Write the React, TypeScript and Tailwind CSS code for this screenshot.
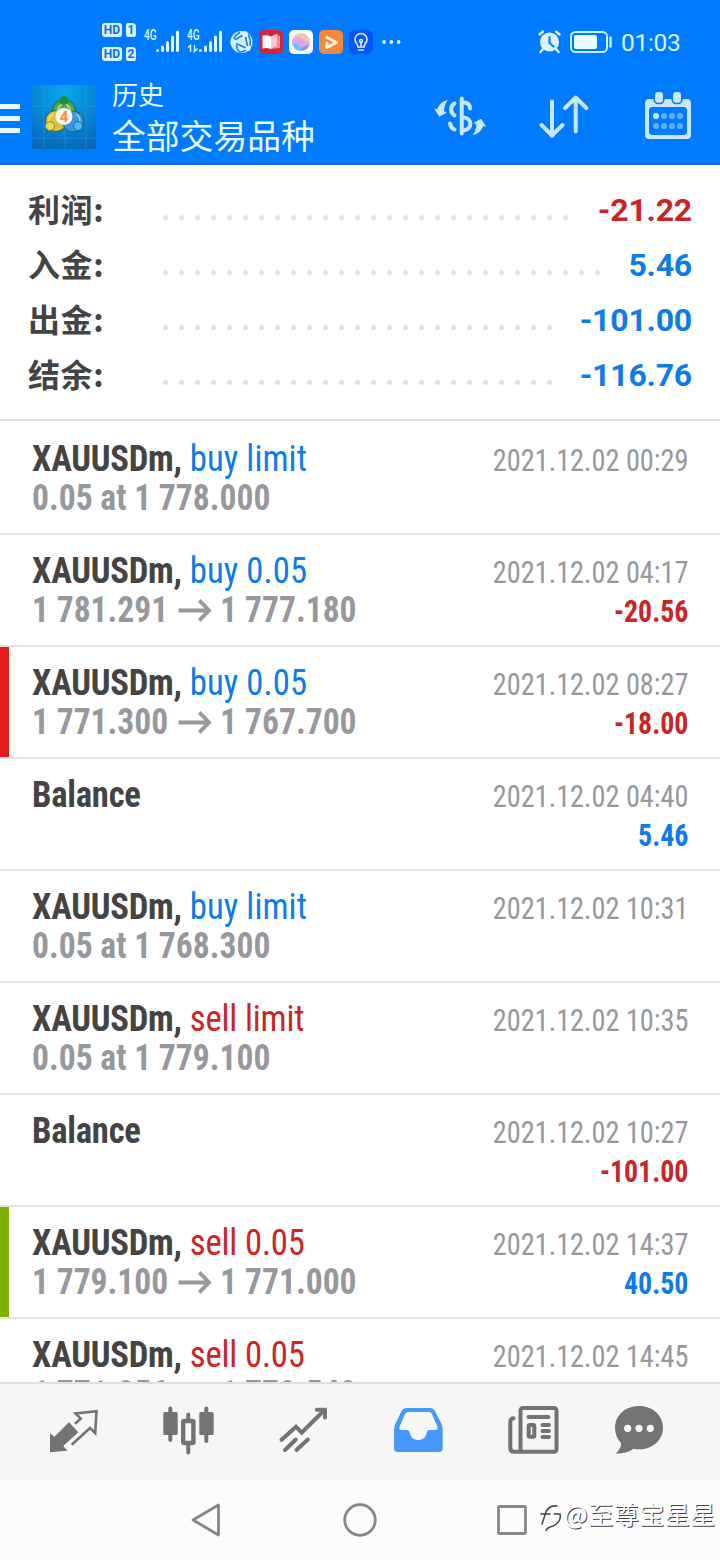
type Tone = "blue" | "red";

interface Deal {
  symbol: string;
  action?: string;
  tone?: Tone;
  detail?: string;
  target?: string;
  date: string;
  profit?: string;
  profitTone?: Tone;
  bar?: string;
}

const toneClass: Record<Tone, string> = {
  blue: "text-[#0c7bec]",
  red: "text-[#cb2424]",
};

const summary: { label: string; value: string; dots: number; tone: Tone }[] = [
  { label: "利润:", value: "-21.22", dots: 26, tone: "red" },
  { label: "入金:", value: "5.46", dots: 28, tone: "blue" },
  { label: "出金:", value: "-101.00", dots: 25, tone: "blue" },
  { label: "结余:", value: "-116.76", dots: 25, tone: "blue" },
];

const deals: Deal[] = [
  { symbol: "XAUUSDm,", action: "buy limit", tone: "blue", detail: "0.05 at 1 778.000", date: "2021.12.02 00:29" },
  { symbol: "XAUUSDm,", action: "buy 0.05", tone: "blue", detail: "1 781.291", target: "1 777.180", date: "2021.12.02 04:17", profit: "-20.56", profitTone: "red" },
  { symbol: "XAUUSDm,", action: "buy 0.05", tone: "blue", detail: "1 771.300", target: "1 767.700", date: "2021.12.02 08:27", profit: "-18.00", profitTone: "red", bar: "bg-[#e31b1b]" },
  { symbol: "Balance", date: "2021.12.02 04:40", profit: "5.46", profitTone: "blue" },
  { symbol: "XAUUSDm,", action: "buy limit", tone: "blue", detail: "0.05 at 1 768.300", date: "2021.12.02 10:31" },
  { symbol: "XAUUSDm,", action: "sell limit", tone: "red", detail: "0.05 at 1 779.100", date: "2021.12.02 10:35" },
  { symbol: "Balance", date: "2021.12.02 10:27", profit: "-101.00", profitTone: "red" },
  { symbol: "XAUUSDm,", action: "sell 0.05", tone: "red", detail: "1 779.100", target: "1 771.000", date: "2021.12.02 14:37", profit: "40.50", profitTone: "blue", bar: "bg-[#7fb000]" },
  { symbol: "XAUUSDm,", action: "sell 0.05", tone: "red", detail: "1 771.056", target: "1 770.540", date: "2021.12.02 14:45" },
];

function HdBadge({ sim }: { sim: string }) {
  return (
    <div className="flex h-3.5 gap-1 text-[12px] leading-[14px] font-bold text-[#0a6fe0]">
      <span className="w-5 rounded-[3px] bg-[#d8f4ff] text-center">HD</span>
      <span className="w-2.5 rounded-[2px] rounded-tr-[4px] bg-[#d8f4ff] text-center">{sim}</span>
    </div>
  );
}

function Signal({ data = false }: { data?: boolean }) {
  return (
    <div className="relative h-6 w-9 text-[#dff6ff]">
      <span className="absolute -top-px left-0 origin-left scale-x-[0.72] text-[14px] leading-3 font-medium">4G</span>
      <svg className="absolute inset-0" width="36" height="24" fill="none" stroke="currentColor" strokeWidth="3" strokeLinecap="round">
        <path d="M13.500 20.500v0M18.500 17V20.500M23.500 12.500V20.500M28.500 7V20.500M33.500 2V20.500" />
        {data && <path d="M1.500 17l2-1.500v6M7.500 15.500v6l2.500-2.500" strokeWidth="1.500" />}
      </svg>
    </div>
  );
}

function StatusBar() {
  return (
    <div className="flex h-[76px] items-start">
      <div className="mt-[23px] ml-[102px] flex w-[34px] flex-col gap-2.5">
        <HdBadge sim="1" />
        <HdBadge sim="2" />
      </div>
      <div className="mt-[30px] ml-2 flex items-center gap-[7px]">
        <Signal />
        <Signal data />
        <svg width="24" height="24" viewBox="0 0 24 24">
          <circle cx="11.500" cy="12" r="11" fill="#d9f2ff" />
          <g fill="none" stroke="#1680f5" strokeWidth="1.600">
            <path d="M4 10.500 13 5M15.500 7l2 9M6 13.500l10 4.500M10 2.500Q5 5 4 9M6.500 15Q7 20 10 22.500M18 4.500Q21 9 20 16M16 20q-3 2-6 2" />
          </g>
          <g fill="#d9f2ff">
            <circle cx="15" cy="4" r="2.800" />
            <circle cx="3.500" cy="12" r="2.800" />
            <circle cx="18" cy="18.500" r="2.600" />
          </g>
        </svg>
      </div>
      <div className="mt-[30px] ml-[5px] flex gap-1.5">
        <svg width="24" height="24" viewBox="0 0 24 24">
          <rect width="24" height="24" rx="5" fill="#cf2640" />
          <path d="M3.500 5.500Q8 4.500 12 6.500V19Q8 17.500 3.500 18.500Z" fill="#fff" />
          <path d="M12 6.500 18.500 3.500V16L12 19Z" fill="#f9c9cc" />
          <path d="M18.500 5.500h2.500V18l-9 1 6.500-3Z" fill="#f28d94" />
        </svg>
        <svg width="24" height="24" viewBox="0 0 24 24">
          <defs>
            <clipPath id="planet">
              <circle cx="12" cy="12" r="9" />
            </clipPath>
          </defs>
          <rect width="24" height="24" rx="5" fill="#fff" />
          <g clipPath="url(#planet)">
            <rect width="24" height="24" fill="#f6c3b2" />
            <path d="M0 12 9 7l15 8v9H0Z" fill="#d9a6ea" />
            <path d="M0 14 7 13l9 9v2H0Z" fill="#62c5f5" />
            <path d="M12 18l9-4v8h-8Z" fill="#8a96ed" />
          </g>
        </svg>
        <svg width="24" height="24" viewBox="0 0 24 24">
          <rect width="24" height="24" rx="5" fill="#f5863a" />
          <path d="M8 7.500 17.500 12.500 8 17.500V13" fill="none" stroke="#fff4e8" strokeWidth="3" strokeLinejoin="round" strokeLinecap="round" />
        </svg>
        <svg width="24" height="24" viewBox="0 0 24 24">
          <rect width="24" height="24" rx="6" fill="#0755f5" />
          <g fill="none" stroke="#d9efff" strokeWidth="1.600" strokeLinecap="round">
            <path d="M9 17c0-3-3-4-3-7.500a6 6 0 0 1 12 0C18 13 15 14 15 17ZM9.500 20h5M12 16v-4" />
            <circle cx="12" cy="11" r="1.500" />
          </g>
        </svg>
      </div>
      <svg className="mt-10 ml-[9px]" width="19" height="4" fill="#dff6ff">
        <circle cx="2" cy="2" r="1.900" />
        <circle cx="9.300" cy="2" r="1.900" />
        <circle cx="16.600" cy="2" r="1.900" />
      </svg>
      <svg className="mt-[30px] ml-[137px]" width="24" height="24" viewBox="0 0 24 24">
        <circle cx="11.500" cy="12" r="9.500" fill="#dcf3ff" />
        <path d="M1.500 4.500 5 1.500M18 1.500l3.500 3M5 19l-2.500 3M18 19l2.500 3" stroke="#dcf3ff" strokeWidth="2.400" strokeLinecap="round" />
        <path d="M11.500 7v6l4 3.500" fill="none" stroke="#0d7cf5" strokeWidth="2.200" strokeLinecap="round" />
      </svg>
      <svg className="mt-[31px] ml-2" width="42" height="22" viewBox="0 0 42 22">
        <rect x="1" y="1" width="36" height="20" rx="4.500" fill="none" stroke="#c4f1ff" strokeWidth="2" />
        <rect x="4" y="4" width="23" height="14" rx="2" fill="#e8fbff" />
        <path d="M40.500 6.500v9" stroke="#c4f1ff" strokeWidth="2.400" strokeLinecap="round" />
      </svg>
      <span className="mt-[29px] ml-[9px] text-[24.500px] leading-7 tracking-[-0.3px] text-[#d8f6ff]">01:03</span>
    </div>
  );
}

function Logo() {
  return (
    <svg className="ml-3" width="64" height="64" viewBox="0 0 64 64">
      <defs>
        <radialGradient id="sky" cx=".5" cy=".1" r="1">
          <stop offset="0" stopColor="#06a8ee" />
          <stop offset=".6" stopColor="#0580cf" />
          <stop offset="1" stopColor="#0663b4" />
        </radialGradient>
        <linearGradient id="leaf" x2="0" y2="1">
          <stop offset="0" stopColor="#2f9b3b" />
          <stop offset="1" stopColor="#8ed06a" />
        </linearGradient>
      </defs>
      <rect width="64" height="64" fill="url(#sky)" />
      <path d="M12 0V64M33 0V64M54 0V64M0 21H64M0 53H64" stroke="#3ba5e2" strokeWidth=".7" opacity=".6" />
      <g stroke="#315d3d" strokeWidth="1">
        <circle cx="32" cy="26" r="11.500" fill="url(#leaf)" />
        <circle cx="24" cy="36" r="10.500" fill="#d8c53a" />
        <circle cx="41" cy="36.500" r="10.500" fill="#3a97dc" />
      </g>
      <g fill="none" strokeWidth="1.300">
        <path d="M25 27q2-8 7-8t7 8" stroke="#b7e78f" />
        <path d="M17 41q-2-9 5-12" stroke="#fff27a" />
        <path d="M47 41q3-8-3-12" stroke="#9bd7ff" />
      </g>
      <path d="M28 16a4 5 0 0 1 8 0q0 4-4 4t-4-4" fill="#278637" />
      <circle cx="18" cy="41" r="4.500" fill="#e9d85b" stroke="#8d8625" />
      <circle cx="46" cy="41" r="4.500" fill="#55b6ef" stroke="#16699f" />
      <circle cx="32" cy="31.500" r="8.500" fill="#f8f5ed" />
      <text x="32" y="37" textAnchor="middle" fontSize="15" fontWeight="700" fill="#ef9148" fontFamily="Roboto, sans-serif">4</text>
    </svg>
  );
}

function Toolbar() {
  return (
    <div className="flex h-[89px] items-start border-b-2 border-[#146fd6]">
      <div className="mt-7 flex w-5 flex-col gap-[7px]">
        <span className="h-[5px] bg-[#e3f8ff]" />
        <span className="h-[5px] bg-[#e3f8ff]" />
        <span className="h-[5px] bg-[#e3f8ff]" />
      </div>
      <div className="mt-[9px] flex">
        <Logo />
      </div>
      <div className="mt-0.5 ml-4 w-[318px] font-['Noto_Sans_CJK_SC',sans-serif] text-[#eafcff]">
        <div className="text-[26px] leading-8">历史</div>
        <div className="mt-1 text-[33.800px] leading-[42px]">全部交易品种</div>
      </div>
      <div className="mt-2.5 flex text-[#c9e7ff]">
        <svg width="60" height="60" fill="none" stroke="currentColor" strokeWidth="4" strokeLinecap="round">
          <path d="M31.700 12.500V47.500" />
          <path d="M34 16.500Q40 17 40 22.500" />
          <path d="M34 31.500C42.500 32.500 42.500 43 34 44.500" />
          <path d="M24.500 17.500C20 20 20 26.500 24.500 29.500M20 37.500Q21 42 24.500 43.500" />
          <path id="swap" d="M4 22.300 7.300 23.300C9.300 18 12.700 15 17.700 14.300 15 18 14.300 21.300 14 25L16.700 26.700 9.300 30.700Z" fill="currentColor" strokeWidth="0" />
          <use href="#swap" transform="rotate(180 30.200 31.700)" />
        </svg>
        <svg className="ml-[45px]" width="60" height="60" fill="none" stroke="currentColor" strokeWidth="4" strokeLinecap="round" strokeLinejoin="round">
          <path d="M17 15.500V49.500M6.500 39 17 49.500 27.500 39M40.700 45.500V11.500M30 22.200 40.700 11.500 51.400 22.200" />
        </svg>
        <svg className="ml-[43px]" width="60" height="60">
          <rect x="7" y="13" width="46" height="40" rx="4" fill="currentColor" />
          <rect x="11" y="21" width="38" height="28" rx="3.500" fill="#007aff" />
          <g fill="currentColor" stroke="#007aff" strokeWidth="1.600">
            <rect x="16.200" y="5.200" width="9.600" height="12.300" rx="4" />
            <rect x="34.200" y="5.200" width="9.600" height="12.300" rx="4" />
          </g>
          {[30, 40].map((y) =>
            [18, 26, 34, 42].map((x) => (
              <circle key={`${x}-${y}`} cx={x} cy={y} r="3.100" fill={x === 18 && y === 30 ? "#c9e7ff" : "#5daeff"} />
            ))
          )}
        </svg>
      </div>
    </div>
  );
}

function Summary() {
  return (
    <section className="h-[256px] shrink-0 border-b-2 border-[#e3e3e3] px-7 pt-[17px]">
      {summary.map((row) => (
        <div key={row.label} className="flex h-[55px] items-center">
          <span className="-mt-0.5 w-[135px] font-['Noto_Sans_CJK_SC',sans-serif] text-[32px] leading-[55px] font-bold tracking-[0.6px] text-[#444]">
            {row.label}
          </span>
          <span className="mt-[15px] flex gap-[11px]">
            {Array.from({ length: row.dots }, (_, i) => (
              <i key={i} className="size-[5px] rounded-full bg-[#e2e2e2]" />
            ))}
          </span>
          <span className={`ml-auto text-[32px] font-bold tracking-[-0.2px] ${toneClass[row.tone]}`}>{row.value}</span>
        </div>
      ))}
    </section>
  );
}

function DealRow({ deal }: { deal: Deal }) {
  return (
    <div className="flex h-28 shrink-0 border-b-2 border-[#e3e3e3] font-['Roboto_Condensed',Roboto,sans-serif] [font-stretch:75%]">
      <span className={`w-[9px] ${deal.bar ?? ""}`} />
      <div className="flex flex-1 justify-between pt-[3px] pr-8 pl-[23px] whitespace-nowrap">
        <div className="text-[36px] leading-[39px] font-bold text-[#97989c]">
          <div className="origin-left scale-x-[0.962] pt-3.5">
            <span className="tracking-[-0.25px] text-[#444]">{deal.symbol}</span>{" "}
            {deal.tone && (
              <span className={`font-normal ${deal.tone === "red" ? "tracking-[-0.15px]" : "tracking-[0.1px]"} ${toneClass[deal.tone]}`}>
                {deal.action}
              </span>
            )}
          </div>
          {deal.detail && (
            <div className="flex origin-left scale-x-[0.932] items-center">
              {deal.detail}
              {deal.target && (
                <>
                  <svg className="mr-2 ml-[11px]" width="37" height="24" fill="none" stroke="currentColor" strokeWidth="3.800">
                    <path d="M0 11.500H32.500M22.500 1.500 33 11.500 22.500 21.500" />
                  </svg>
                  {deal.target}
                </>
              )}
            </div>
          )}
        </div>
        <div className="origin-right scale-x-[0.912] pt-[15px] text-right text-[31px] leading-[39px] text-[#97989c]">
          <div>{deal.date}</div>
          {deal.profitTone && <div className={`text-[30.500px] font-bold ${toneClass[deal.profitTone]}`}>{deal.profit}</div>}
        </div>
      </div>
    </div>
  );
}

function TabBar() {
  return (
    <nav className="flex h-[98px] shrink-0 gap-[55px] border-t-2 border-[#e0e0e0] bg-[#f6f6f6] pt-4 pl-11 text-[#737373]">
      <svg width="60" height="60">
        <path d="M6 33.300 10.300 36.700 25 22.300 34.300 32.300 19.300 46 23.300 50.700 6 52.300Z" fill="currentColor" />
        <path d="M31 23.800 36.700 18.700 31.500 13.500 52.500 11.200 51.200 33 46 28 27.700 44.700" fill="none" stroke="currentColor" strokeWidth="2.600" />
      </svg>
      <svg width="60" height="60" fill="currentColor">
        <rect x="4.300" y="12" width="14.400" height="23" rx="1.500" />
        <rect x="40.300" y="12" width="14.400" height="23" rx="1.500" />
        <path d="M11.300 8.500V40M47.300 8.500V41M29.300 14.500V19M29.300 44V52.500" stroke="currentColor" strokeWidth="4" strokeLinecap="round" />
        <rect x="24.200" y="21" width="10.200" height="22" rx="1" fill="none" stroke="currentColor" strokeWidth="4.400" />
      </svg>
      <svg width="60" height="60" fill="none" stroke="currentColor" strokeWidth="4" strokeLinecap="round">
        <path d="M7.500 39.800 22 26.700 27.700 32.700 50.500 10M42.800 9.800H51V17.500M21.800 39.500 11 50M33.800 39.500 22.500 50" />
      </svg>
      <svg width="60" height="60">
        <path
          fillRule="evenodd"
          d="M18 8H41Q44.300 8 46 11L52.500 24Q53.700 27 53.700 30V48.500Q53.700 52 50 52H9Q5 52 5 48.500V30Q5 27 6.300 24L12.500 11Q14 8 18 8ZM19 12Q17 12 16 14L10.500 27Q9.500 30 12 30H18Q20.500 30 20.800 32.500C21.500 42.500 37 42.500 37.600 32.500Q38 30 40 30H46.500Q49.500 30 48.500 27L43 14Q42 12 40 12Z"
          fill="#4599fb"
        />
      </svg>
      <svg width="60" height="60" fill="none" stroke="currentColor" strokeWidth="4" strokeLinecap="round" strokeLinejoin="round">
        <rect x="16.500" y="8" width="36" height="43.700" rx="2.500" />
        <path d="M9.500 18.200Q6.300 18.500 6.300 22V48Q6.300 51.800 10 51.800H17" />
        <path d="M24.500 17H44.500M38.500 25H45M38.500 31H45M38.500 37H45" />
        <rect x="24.700" y="25" width="5.600" height="11.700" rx="1" />
      </svg>
      <svg className="-ml-2.5" width="60" height="60" fill="currentColor">
        <path d="M30 6C43.500 6 54 15.300 54 27.700S43.500 49.300 30 49.300Q27 49.300 24.500 48.800 18 53.700 6.700 53.700 12.500 48 12 43C8 39 6 33.500 6 27.700 6 15.300 16.500 6 30 6Z" />
        <g fill="#f6f6f6">
          <circle cx="18.700" cy="28.300" r="3.600" />
          <circle cx="30" cy="28.300" r="3.600" />
          <circle cx="41.300" cy="28.300" r="3.600" />
        </g>
      </svg>
    </nav>
  );
}

function SystemNav() {
  return (
    <footer className="flex h-20 shrink-0 items-center bg-[#fcfcfc]">
      <svg className="ml-[190px]" width="32" height="36" fill="none" stroke="#878787" strokeWidth="2.800" strokeLinejoin="round">
        <path d="M3 18 28.500 3V33Z" />
      </svg>
      <svg className="ml-[120px]" width="36" height="36" fill="none" stroke="#878787" strokeWidth="2.800">
        <circle cx="18" cy="18" r="15.300" />
      </svg>
      <svg className="ml-[119px]" width="30" height="30" fill="none" stroke="#878787" strokeWidth="2.800">
        <rect x="1.500" y="1.500" width="27" height="27" rx="1" />
      </svg>
      <div className="mb-3.5 ml-[13px] flex items-center whitespace-nowrap text-white [text-shadow:1px_1px_0_#444]">
        <svg className="mt-2" width="24" height="30" fill="none" stroke="#444" strokeWidth="1.500" strokeLinecap="round">
          <path d="M2 22 6 10Q9 3 17 4M1 12H10M14 12H20C21.500 18 17 22.500 13 24 9 25 7 26 6 28.500" />
        </svg>
        <span className="font-['Noto_Sans_CJK_SC',sans-serif] text-[25px] leading-8 tracking-[0.5px]">@至尊宝星星</span>
      </div>
    </footer>
  );
}

export default function App() {
  return (
    <div className="flex h-[1560px] w-[720px] flex-col overflow-hidden bg-white font-[Roboto,sans-serif]">
      <header className="shrink-0 bg-[#007aff]">
        <StatusBar />
        <Toolbar />
      </header>
      <main className="flex min-h-0 flex-1 flex-col overflow-hidden">
        <Summary />
        <div className="flex flex-col pt-0.5">
          {deals.map((deal) => (
            <DealRow key={deal.date} deal={deal} />
          ))}
        </div>
      </main>
      <TabBar />
      <SystemNav />
    </div>
  );
}
